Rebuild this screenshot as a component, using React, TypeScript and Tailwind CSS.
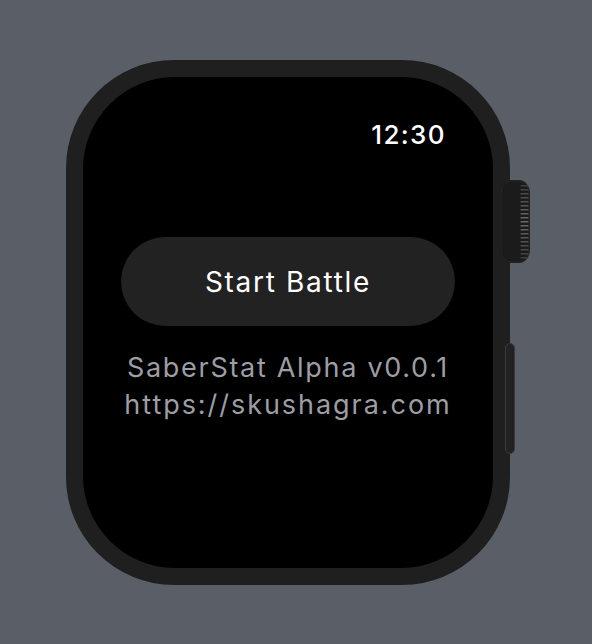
const ridges = Array.from({ length: 19 }, (_, i) => i);

function Crown() {
  return (
    <svg width="30" height="83" viewBox="0 0 30 83" className="block">
      <rect x="0" y="0" width="30" height="83" rx="11" ry="14" fill="#1b1b1b" />
      <rect x="1" y="1" width="28" height="81" rx="10" ry="13" fill="none" stroke="#262626" strokeWidth="1" />
      {ridges.map((i) => {
        const y = 5 + i * 4;
        const mid = Math.abs(i - 9) / 9;
        const shade = Math.round(0x6a - mid * 0x2c);
        const c = `rgb(${shade},${shade},${shade})`;
        return <rect key={i} x="20.5" y={y} width="8" height="1.6" rx="0.5" fill={c} />;
      })}
    </svg>
  );
}

export default function App() {
  return (
    <div className="w-[592px] h-[644px] bg-[#5a5f67] pt-[60px] pl-[66px] font-['Inter',_'Liberation_Sans',_sans-serif]">
      <div className="relative w-[444px] h-[525px]">
        {/* Watch body */}
        <div className="w-full h-full rounded-[108px] bg-[#1f1f1f] p-[17px]">
          <div className="w-full h-full rounded-[92px] bg-black flex flex-col">
            <div className="flex justify-end pt-[42px] pr-[47px]">
              <span className="text-white text-[26px] leading-[32px] font-medium tracking-[1.4px]">12:30</span>
            </div>

            <button className="mt-[86px] mx-[38px] h-[89px] rounded-full bg-[#222222] flex items-center justify-center">
              <span className="text-white text-[28px] leading-[34px] tracking-[1.7px]">Start Battle</span>
            </button>

            <div className="mt-[23px] flex flex-col items-center text-[#9d9ea4] text-[27px] leading-[37px]">
              <span className="tracking-[1.7px]">SaberStat Alpha v0.0.1</span>
              <span className="tracking-[1.95px]">https://skushagra.com</span>
            </div>
          </div>
        </div>

        {/* Digital crown */}
        <div className="absolute left-[434px] top-[120px]">
          <Crown />
        </div>

        {/* Side button */}
        <div className="absolute left-[439px] top-[283px] w-[10px] h-[111px] rounded-[5px] bg-[#222222] border border-[#3a3a3a]" />
      </div>
    </div>
  );
}
